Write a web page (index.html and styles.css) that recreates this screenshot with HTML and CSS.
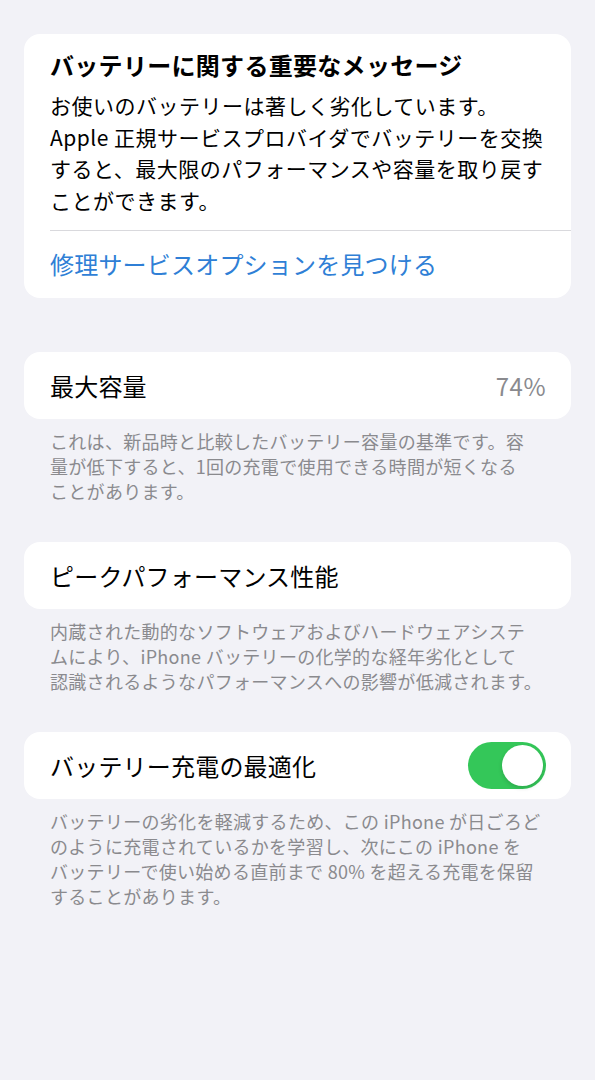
FILE: index.html
```html
<!DOCTYPE html>
<html lang="ja">
<head>
<meta charset="utf-8">
<title>バッテリーの状態</title>
<link rel="stylesheet" href="styles.css">
</head>
<body>
<main class="page">
  <section class="card message">
    <h1 class="msg-title">バッテリーに関する重要なメッセージ</h1>
    <p class="msg-body">お使いのバッテリーは著しく劣化しています。<br>Apple 正規サービスプロバイダでバッテリーを交換<br>すると、最大限のパフォーマンスや容量を取り戻す<br>ことができます。</p>
    <div class="msg-link-row"><a class="msg-link" href="#">修理サービスオプションを見つける</a></div>
  </section>

  <section class="group first-group">
    <div class="card row">
      <span class="row-label">最大容量</span>
      <span class="row-value">74%</span>
    </div>
    <p class="footnote">これは、新品時と比較したバッテリー容量の基準です。容<br>量が低下すると、1回の充電で使用できる時間が短くなる<br>ことがあります。</p>
  </section>

  <section class="group">
    <div class="card row">
      <span class="row-label">ピークパフォーマンス性能</span>
    </div>
    <p class="footnote">内蔵された動的なソフトウェアおよびハードウェアシステ<br>ムにより、iPhone バッテリーの化学的な経年劣化として<br>認識されるようなパフォーマンスへの影響が低減されます。</p>
  </section>

  <section class="group">
    <div class="card row">
      <span class="row-label">バッテリー充電の最適化</span>
      <span class="toggle on"><span class="knob"></span></span>
    </div>
    <p class="footnote">バッテリーの劣化を軽減するため、この iPhone が日ごろど<br>のように充電されているかを学習し、次にこの iPhone を<br>バッテリーで使い始める直前まで 80% を超える充電を保留<br>することがあります。</p>
  </section>
</main>
</body>
</html>
```

FILE: styles.css
```css
* { box-sizing: border-box; }
html, body {
  margin: 0;
  padding: 0;
  background: #f2f2f7;
}
body {
  font-family: "Noto Sans CJK JP", "Noto Sans", "Liberation Sans", sans-serif;
  color: #000;
  width: 595px;
  height: 1080px;
  overflow: hidden;
}
.page {
  padding: 34px 24px 0 24px;
  display: flex;
  flex-direction: column;
}
.card {
  background: #fff;
  border-radius: 16px;
}
.message {
  padding: 15px 0 0 26px;
}
.msg-title {
  margin: 0;
  font-size: 24px;
  line-height: 32px;
  font-weight: 700;
  letter-spacing: 0.3px;
}
.msg-body {
  margin: 9px 0 0 0;
  padding: 0 26px 14px 0;
  font-size: 21px;
  line-height: 31.5px;
  letter-spacing: 0.5px;
  border-bottom: 1px solid #d9d9dd;
  white-space: nowrap;
}
.msg-link-row {
  height: 67px;
  display: flex;
  align-items: center;
  padding-bottom: 2px;
}
.msg-link {
  color: #2f7fd6;
  text-decoration: none;
  font-size: 24px;
  line-height: 32px;
  letter-spacing: 0.2px;
}
.group {
  margin-top: 38px;
  display: flex;
  flex-direction: column;
}
.first-group { margin-top: 54px; }
.row {
  height: 67px;
  padding: 0 25px 0 26px;
  display: flex;
  align-items: center;
  justify-content: space-between;
}
.row-label {
  font-size: 24px;
  line-height: 32px;
  letter-spacing: 0.2px;
}
.row-value {
  font-size: 24px;
  line-height: 32px;
  color: #8a8a8e;
  letter-spacing: 0.5px;
}
.footnote {
  margin: 10px 0 0 0;
  padding-left: 26px;
  font-size: 18px;
  line-height: 25px;
  color: #8a8a8e;
  letter-spacing: 0.3px;
  white-space: nowrap;
}
.toggle {
  width: 78px;
  height: 47px;
  border-radius: 24px;
  background: #34c759;
  display: flex;
  align-items: center;
  justify-content: flex-end;
  padding: 3px;
}
.knob {
  width: 41px;
  height: 41px;
  border-radius: 50%;
  background: #fff;
  box-shadow: 0 2px 4px rgba(0,0,0,0.15);
}
```
